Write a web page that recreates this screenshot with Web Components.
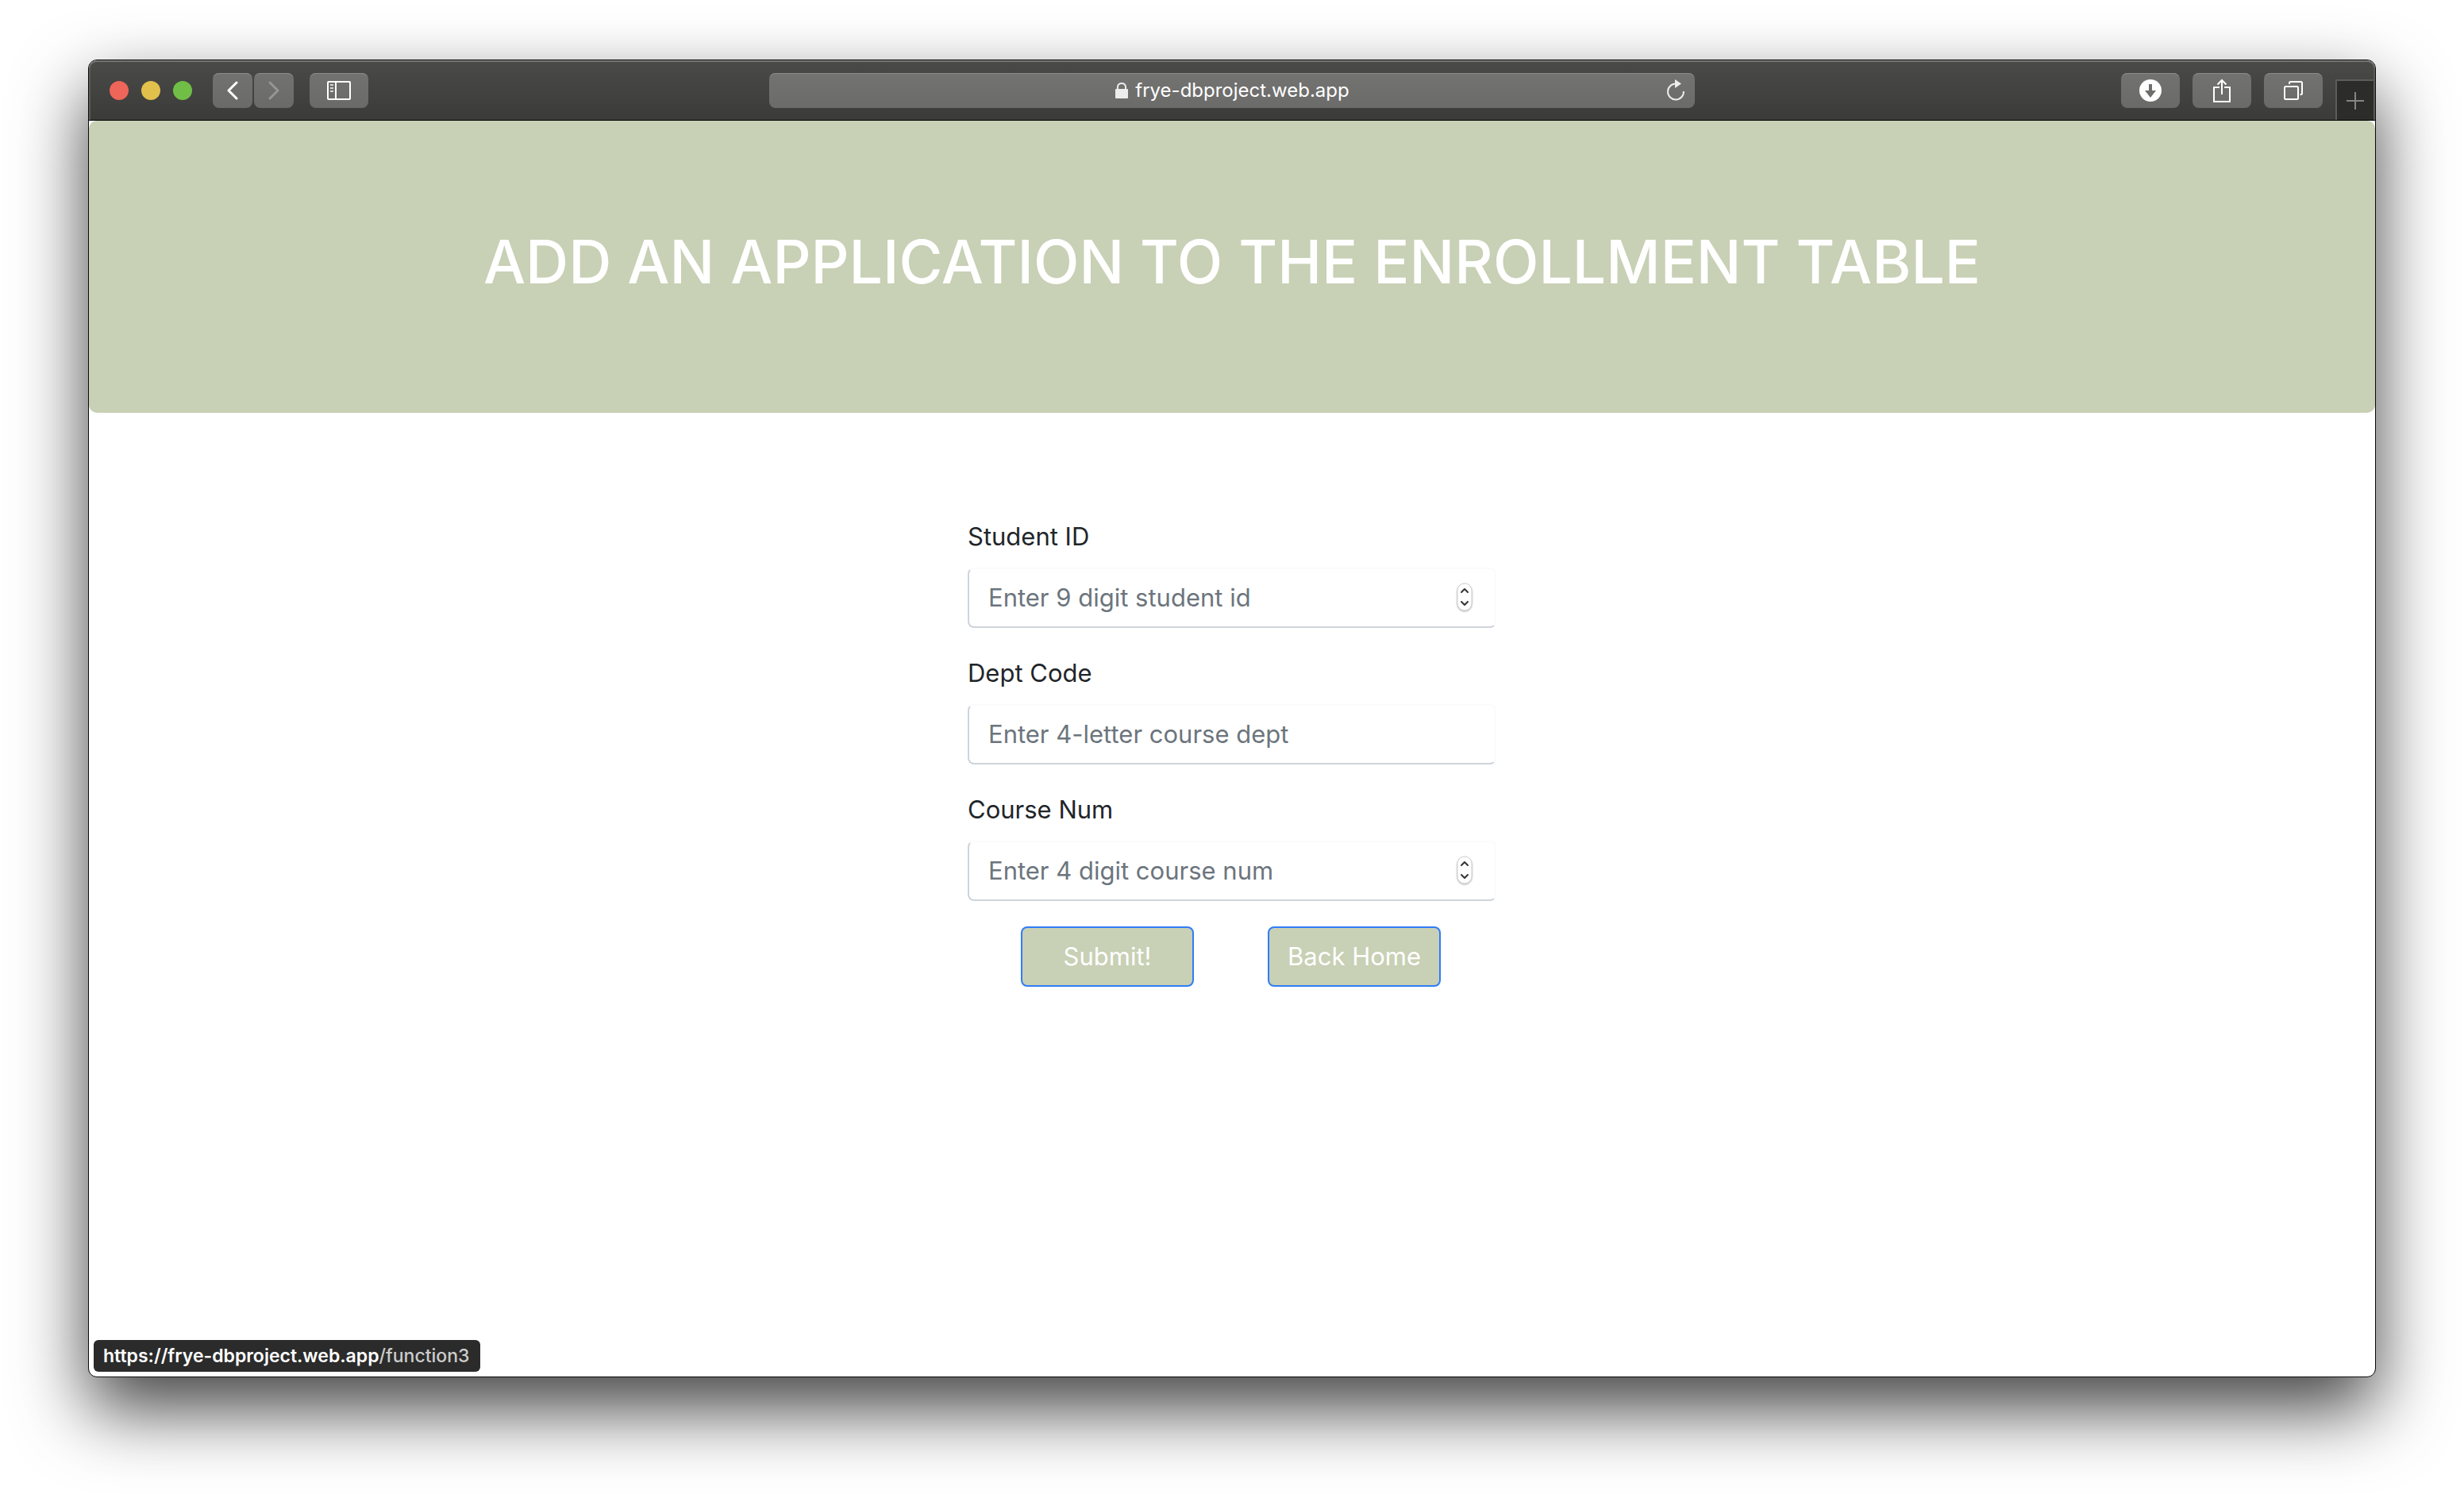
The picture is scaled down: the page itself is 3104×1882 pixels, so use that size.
<!DOCTYPE html>
<html lang="en">
<head>
<meta charset="utf-8">
<title>Enrollment</title>
<style>
html, body { height: 100%; }
body {
  margin: 0;
  box-sizing: border-box;
  padding: 75px 111px 147px;
  background: #fff;
  color: #212529;
  font: 32px/48px Inter, "Liberation Sans", sans-serif;
  overflow: hidden;
}
</style>
</head>
<body>
<browser-window>
  <browser-toolbar slot="toolbar" address="frye-dbproject.web.app"></browser-toolbar>
  <page-banner>ADD AN APPLICATION TO THE ENROLLMENT TABLE</page-banner>
  <enrollment-form></enrollment-form>
  <status-bar slot="status" host="https://frye-dbproject.web.app" path="/function3"></status-bar>
</browser-window>
<script>
function mount(el, html) {
  el.attachShadow({ mode: "open" }).innerHTML = html;
}

customElements.define("browser-window", class extends HTMLElement {
  constructor() {
    super();
    mount(this, `
<style>
:host {
  display: flex; flex-direction: column; position: relative;
  box-sizing: border-box; height: 100%;
  border: 1px solid #0a0a0a; border-radius: 11px;
  background: #fff;
  box-shadow: 0 40px 90px rgba(0,0,0,.74);
}
main { flex: 1; min-height: 0; }
.status { position: absolute; left: 6px; bottom: 6px; }
</style>
<slot name="toolbar"></slot>
<main><slot></slot></main>
<div class="status"><slot name="status"></slot></div>`);
  }
});

customElements.define("traffic-lights", class extends HTMLElement {
  constructor() {
    super();
    mount(this, `
<style>
:host { display: flex; gap: 16px; }
button { width: 24px; height: 24px; padding: 0; border: 0; border-radius: 50%; }
.close { background: #ee6559; }
.min { background: #e1c04c; }
.max { background: #71be47; }
</style>
<button class="close" aria-label="Close"></button>
<button class="min" aria-label="Minimize"></button>
<button class="max" aria-label="Zoom"></button>`);
  }
});

customElements.define("tool-button", class extends HTMLElement {
  constructor() {
    super();
    mount(this, `
<style>
:host { display: block; width: 74px; }
:host([narrow]) { width: 50px; }
button {
  display: flex; align-items: center; justify-content: center;
  width: 100%; height: 44px; padding: 0; border: 0; border-radius: 8px;
  background: linear-gradient(#727270, #6a6a69);
  box-shadow: inset 0 2px 0 -1px #8b8b89;
}
</style>
<button aria-label="${this.getAttribute("label")}"><slot></slot></button>`);
  }
});

customElements.define("browser-toolbar", class extends HTMLElement {
  constructor() {
    super();
    mount(this, `
<style>
:host {
  display: grid; align-items: center;
  grid-template-columns: minmax(0, 1fr) minmax(0, 1166px) minmax(0, 1fr);
  box-sizing: border-box; height: 76px;
  border-bottom: 1px solid #000; border-radius: 10px 10px 0 0;
  background: linear-gradient(#4a4a48, #3b3b3a);
  box-shadow: inset 0 2px 0 #777775, inset 2px 0 0 #5c5c5a, inset -2px 0 0 #5c5c5a;
}
svg { display: block; fill: none; stroke: #fff; }
.left { display: flex; align-items: center; padding-left: 26px; }
traffic-lights { margin-right: 26px; }
.nav { display: flex; gap: 2px; margin-right: 20px; }
.address {
  display: grid; grid-template-columns: 1fr auto 1fr; align-items: center;
  box-sizing: border-box; height: 44px; border-radius: 8px; padding: 0 12px;
  background: linear-gradient(#737371, #6b6b6a);
  box-shadow: inset 0 2px 0 -1px #8b8b89;
  color: #fff; font-size: 24px; line-height: 32px;
}
.site { grid-column: 2; display: flex; align-items: center; gap: 8px; padding-top: 1px; }
.reload { justify-self: end; padding: 0; border: 0; background: none; }
.right { display: flex; justify-content: flex-end; align-self: stretch; align-items: center; }
.tools { display: flex; gap: 16px; margin-right: 16px; }
.add {
  align-self: flex-end; box-sizing: border-box; width: 50px; height: 51px; padding: 0;
  border: solid #5c5c5a; border-width: 2px 2px 0 2px; background: #2c2c2b;
  display: flex; align-items: center; justify-content: center;
}
</style>
<div class="left">
  <traffic-lights></traffic-lights>
  <div class="nav">
    <tool-button narrow label="Back"><svg width="14" height="24" stroke-width="3" stroke-linecap="round" stroke-linejoin="round"><path d="M12 2 2 12 12 22"/></svg></tool-button>
    <tool-button narrow label="Forward"><svg width="14" height="24" style="stroke:#969695" stroke-width="3" stroke-linecap="round" stroke-linejoin="round"><path d="M2 2 12 12 2 22"/></svg></tool-button>
  </div>
  <tool-button label="Sidebar"><svg width="30" height="24" stroke-width="2"><rect x="1" y="1" width="28" height="22" rx="1"/><path d="M11 1V23"/><path stroke="#d5d5d5" d="M4 5H8M4 9H8M4 13H8"/></svg></tool-button>
</div>
<div class="address">
  <div class="site">
    <svg width="18" height="22" viewBox="0 0 18 22"><rect x="1" y="9" width="16" height="12" rx="1" fill="#ececec" stroke="none"/><path stroke="#ececec" stroke-width="2" d="M4 10V6.500C4 0.500 14 0.500 14 6.500V10"/></svg>
    <span>${this.getAttribute("address")}</span>
  </div>
  <button class="reload" aria-label="Reload"><svg width="24" height="28" viewBox="0 0 24 28"><path stroke="#ececec" stroke-width="2" d="M22 15A10 10 0 1 1 12 5.500"/><path fill="#ececec" stroke="none" d="M11 0 19 5.500 11 11Z"/></svg></button>
</div>
<div class="right">
  <div class="tools">
    <tool-button label="Downloads"><svg width="28" height="28"><circle cx="14" cy="14" r="14" fill="#fff" stroke="none"/><path fill="#6e6e6d" stroke="none" d="M12 6H16V14H21L14 23 7 14H12Z"/></svg></tool-button>
    <tool-button label="Share"><svg width="24" height="32" viewBox="0 0 24 32" stroke-width="2"><path d="M9 12H2V30H22V12H15M12 21V3M6.500 8.500 12 3 17.500 8.500"/></svg></tool-button>
    <tool-button label="Show tabs"><svg width="24" height="24" stroke-width="2"><rect x="1" y="7" width="17" height="16" rx="1.500"/><path d="M7 4V2.500Q7 1 8.500 1H21.500Q23 1 23 2.500V15.500Q23 17 21.500 17H20.500"/></svg></tool-button>
  </div>
  <button class="add" aria-label="New tab"><svg width="22" height="22" style="stroke:#858584" stroke-width="2"><path d="M11 0V22M0 11H22"/></svg></button>
</div>`);
  }
});

customElements.define("page-banner", class extends HTMLElement {
  constructor() {
    super();
    mount(this, `
<style>
:host {
  display: block; padding: 130px 64px 126px; margin-bottom: 64px;
  border-radius: 10px; background: #c8d0b5; text-align: center;
}
h1 { margin: 0 0 16px; color: #fff; font-size: 75px; line-height: 96px; font-weight: 500; }
</style>
<h1><slot></slot></h1>`);
  }
});

customElements.define("form-field", class extends HTMLElement {
  constructor() {
    super();
    const number = this.getAttribute("type") === "number";
    mount(this, `
<style>
:host { display: block; margin-bottom: 32px; }
label { display: block; margin-bottom: 15px; font-size: 31px; line-height: 48px; }
.box {
  display: flex; align-items: center; box-sizing: border-box; height: 76px; padding: 0 28px 0 24px;
  border: 2px solid; border-color: #fbfbfc #fbfbfc #ced4da #ced4da; border-radius: 8px; background: #fff;
}
input {
  flex: 1; min-width: 0; padding: 0; border: 0; outline: 0; background: none;
  font: inherit; font-size: 31px; line-height: 48px; color: #495057; appearance: textfield;
}
input::-webkit-inner-spin-button { appearance: none; display: none; }
input::placeholder { color: #6c757d; opacity: 1; }
svg { display: block; overflow: visible; margin-bottom: 2px; filter: drop-shadow(0 1px 1px rgba(0,0,0,.3)); }
:host { padding-top: 1px; }
</style>
<label for="field">${this.getAttribute("label")}</label>
<div class="box">
  <input id="field" type="${number ? "number" : "text"}" placeholder="${this.getAttribute("hint")}">
  ${number ? `<svg width="20" height="36" fill="none"><rect x="1" y="1" width="18" height="34" rx="9" fill="#fff" stroke="#d0d0d0"/><path stroke="#333" stroke-width="2" stroke-linecap="round" stroke-linejoin="round" d="M6 12 10 8 14 12M6 24 10 28 14 24"/></svg>` : ""}
</div>`);
  }
});

customElements.define("action-button", class extends HTMLElement {
  constructor() {
    super();
    mount(this, `
<style>
:host { display: block; }
button {
  box-sizing: border-box; width: 218px; height: 76px; padding: 0;
  border: 2px solid #2f7df6; border-radius: 8px; background: #c8d0b5;
  color: #fff; font: inherit; font-size: 31px; line-height: 48px;
}
</style>
<button type="button"><slot></slot></button>`);
  }
});

customElements.define("enrollment-form", class extends HTMLElement {
  constructor() {
    super();
    mount(this, `
<style>
:host { display: block; padding-top: 67px; }
form { max-width: 666px; margin: 0 auto; }
.actions { display: flex; justify-content: space-between; padding: 0 70px 0 67px; }
</style>
<form>
  <form-field label="Student ID" type="number" hint="Enter 9 digit student id"></form-field>
  <form-field label="Dept Code" hint="Enter 4-letter course dept"></form-field>
  <form-field label="Course Num" type="number" hint="Enter 4 digit course num"></form-field>
  <div class="actions">
    <action-button>Submit!</action-button>
    <action-button>Back Home</action-button>
  </div>
</form>`);
  }
});

customElements.define("status-bar", class extends HTMLElement {
  constructor() {
    super();
    mount(this, `
<style>
:host {
  display: block; padding: 4px 14px 4px 12px; border-radius: 6px; background: #2b2b2b;
  color: #ccc; font-size: 23px; line-height: 32px; font-weight: 500; white-space: nowrap;
}
b { color: #fff; font-weight: 600; }
</style>
<b>${this.getAttribute("host")}</b>${this.getAttribute("path")}`);
  }
});
</script>
</body>
</html>
